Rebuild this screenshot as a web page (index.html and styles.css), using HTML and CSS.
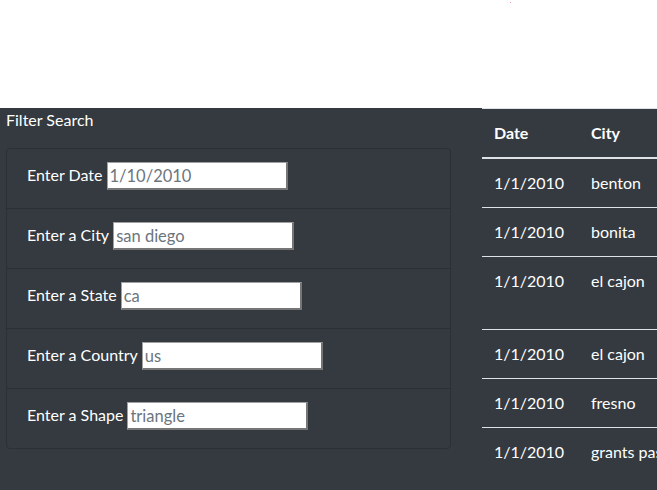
FILE: index.html
```html
<!DOCTYPE html>
<html>
<head>
<meta charset="utf-8">
<link rel="stylesheet" href="styles.css">
</head>
<body>
<span class="dot"></span>
<div class="top"></div>
<div class="main">
  <div class="left">
    <div class="title">Filter Search</div>
    <ul class="card">
      <li class="item"><label>Enter Date</label><input value="1/10/2010"></li>
      <li class="item"><label>Enter a City</label><input value="san diego"></li>
      <li class="item"><label>Enter a State</label><input value="ca"></li>
      <li class="item"><label>Enter a Country</label><input value="us"></li>
      <li class="item"><label>Enter a Shape</label><input value="triangle"></li>
    </ul>
  </div>
  <div class="right">
    <table class="tbl">
      <thead><tr><th class="c1">Date</th><th>City</th></tr></thead>
      <tbody>
        <tr><td class="c1">1/1/2010</td><td>benton</td></tr>
        <tr><td class="c1">1/1/2010</td><td>bonita</td></tr>
        <tr class="tall"><td class="c1">1/1/2010</td><td>el cajon</td></tr>
        <tr><td class="c1">1/1/2010</td><td>el cajon</td></tr>
        <tr><td class="c1">1/1/2010</td><td>fresno</td></tr>
        <tr><td class="c1">1/1/2010</td><td>grants pass</td></tr>
      </tbody>
    </table>
  </div>
</div>
</body>
</html>
```
FILE: styles.css
```css
html, body {
  margin: 0;
  padding: 0;
  background: #fff;
  font-family: Lato, "Open Sans", sans-serif;
  font-size: 16px;
  line-height: 24px;
  overflow: hidden;
  height: 490px;
}
.dot {
  position: absolute;
  left: 510px;
  top: 2px;
  width: 1px;
  height: 1px;
  background: #f0a0a8;
}
.top {
  height: 108px;
}
.main {
  display: flex;
  background: #343a40;
  height: 382px;
  color: #fff;
}
.left {
  width: 481px;
  flex: none;
}
.title {
  padding-left: 6px;
  line-height: 24px;
}
.card {
  list-style: none;
  margin: 16px 0 0 6px;
  padding: 0;
  width: 443px;
  border: 1px solid #2b3035;
  border-radius: 4px;
}
.item {
  display: flex;
  align-items: flex-start;
  box-sizing: border-box;
  height: 60px;
  padding: 13px 20px 0;
  border-bottom: 1px solid #2b3035;
}
.item:last-child {
  border-bottom: none;
  height: 59px;
}
.item label {
  color: #fff;
  line-height: 24px;
  padding-top: 1px;
}
.item input {
  box-sizing: border-box;
  width: 181px;
  height: 28px;
  margin-left: 4px;
  border-style: solid;
  border-width: 1px 2px 2px 1px;
  border-color: #a0a0a0 #767676 #767676 #a0a0a0;
  background: #fff;
  color: #6c757d;
  font-family: inherit;
  font-size: 16.5px;
  padding: 0 2px;
  outline: none;
}
.right {
  flex: 1;
  overflow: hidden;
  margin-left: 1px;
}
.tbl {
  border-collapse: collapse;
  width: 300px;
  color: #fff;
  white-space: nowrap;
}
.tbl th, .tbl td {
  text-align: left;
  padding: 12px;
  line-height: 24px;
  border-top: 1px solid #dee2e6;
  vertical-align: top;
}
.tbl th {
  font-weight: bold;
  border-bottom: 2px solid #dee2e6;
}
.tbl .c1 {
  width: 73px;
}
.tbl tr.tall td {
  height: 48px;
}
```
